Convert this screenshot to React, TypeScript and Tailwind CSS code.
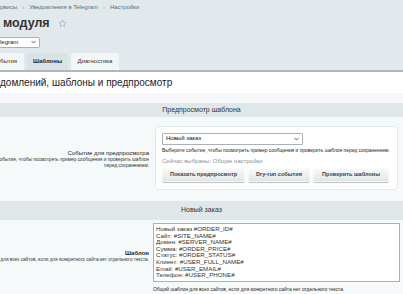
import React from "react";

const F = { fontFamily: '"Liberation Sans", Arial, sans-serif' };

function Star() {
  return (
    <svg width="9" height="9" viewBox="0 0 24 24" fill="none" stroke="#a3b1b8" strokeWidth="2" strokeLinejoin="round">
      <path d="M12 2.5l2.9 6.1 6.6.8-4.9 4.6 1.3 6.6L12 17.3l-5.9 3.3 1.3-6.6-4.9-4.6 6.6-.8z" />
    </svg>
  );
}

function Chevron() {
  return (
    <svg width="5" height="4" viewBox="0 0 10 6" fill="none" stroke="#555" strokeWidth="1.8">
      <path d="M1 1l4 4 4-4" />
    </svg>
  );
}

function Btn({ children, w }: { children: React.ReactNode; w: string }) {
  return (
    <div className={`${w} h-[14px] flex items-center justify-center rounded-[2px] bg-gradient-to-b from-[#f8fafa] to-[#dfe5e7] shadow-[0_1px_1px_rgba(0,0,0,0.25),inset_0_0_0_1px_rgba(255,255,255,0.6)] text-[5.6px] font-bold text-[#3b4448] whitespace-nowrap`}>
      {children}
    </div>
  );
}

const lines = [
  "Новый заказ #ORDER_ID#",
  "Сайт: #SITE_NAME#",
  "Домен: #SERVER_NAME#",
  "Сумма: #ORDER_PRICE#",
  "Статус: #ORDER_STATUS#",
  "Клиент: #USER_FULL_NAME#",
  "Email: #USER_EMAIL#",
  "Телефон: #USER_PHONE#",
];

export default function App() {
  return (
    <div style={F} className="w-[403px] h-[294px] overflow-hidden bg-[#e1e9ec] text-[#000]">
      {/* breadcrumbs */}
      <div className="h-[14px] flex items-center gap-[5px] text-[6px] text-[#5a6f7c] whitespace-nowrap pt-[1px]">
        <span>рвисы</span>
        <span className="text-[#8a9aa3]">›</span>
        <span>Уведомления в Telegram</span>
        <span className="text-[#8a9aa3]">›</span>
        <span>Настройки</span>
      </div>
      {/* title */}
      <div className="h-[17px] flex items-center gap-[8px] whitespace-nowrap pl-[3px] pt-[1px]">
        <span className="text-[12.5px] font-bold text-[#333]">модуля</span>
        <Star />
      </div>
      {/* select */}
      <div className="h-[22px] flex items-center">
        <div className="w-[40px] h-[11px] bg-white border border-[#a7b2b8] rounded-r-[2px] border-l-0 flex items-center overflow-hidden">
          <span className="text-[6px] text-[#222] whitespace-nowrap">legram</span>
          <span className="ml-auto mr-[3px]"><Chevron /></span>
        </div>
      </div>
      {/* tabs */}
      <div className="h-[17px] flex items-end gap-[3px] whitespace-nowrap">
        <div className="h-[17px] w-[24px] bg-[#f3f6f7] rounded-tr-[2px] flex items-center text-[6px] text-[#333]">бытия</div>
        <div className="h-[17px] w-[41px] bg-[#d9e2e5] rounded-t-[2px] flex items-center justify-center text-[6px] font-bold text-[#222]">Шаблоны</div>
        <div className="h-[17px] w-[48px] bg-[#f3f6f7] rounded-t-[2px] flex items-center justify-center text-[6px] text-[#333]">Диагностика</div>
      </div>
      <div className="h-[2px] bg-[#aeb7ba]" />
      {/* content */}
      <div className="bg-white">
        <div className="h-[21px] flex items-center whitespace-nowrap text-[10px] text-[#222]">
          домлений, шаблоны и предпросмотр
        </div>
        <div className="h-[10px] bg-[#f5f7f8]" />
        <div className="h-[14px] bg-[#dfe7ea] flex items-center justify-center text-[7px] text-[#333]">Предпросмотр шаблона</div>
        <div className="bg-[#f6f9f9] flex items-center h-[81px]">
          <div className="w-[150px] pr-[1px] text-right flex flex-col items-end whitespace-nowrap pt-[2px]">
            <div className="text-[6px] text-[#222] leading-[8px]">Событие для предпросмотра</div>
            <div className="text-[4.75px] text-[#333] leading-[6px]">обытие, чтобы посмотреть пример сообщения и проверить шаблон</div>
            <div className="text-[4.75px] text-[#333] leading-[6px]">перед сохранением.</div>
          </div>
          <div className="ml-[5px] w-[243px] h-[64px] bg-white border border-[#e3e9eb] rounded-[4px] px-[6px] pt-[6px]">
            <div className="w-[141px] h-[12px] bg-white border border-[#a7b2b8] rounded-[1px] flex items-center px-[3px]">
              <span className="text-[6px] text-[#111]">Новый заказ</span>
              <span className="ml-auto"><Chevron /></span>
            </div>
            <div className="mt-[3px] text-[4.9px] leading-[6px] text-[#222] whitespace-nowrap">Выберите событие, чтобы посмотреть пример сообщения и проверить шаблон перед сохранением.</div>
            <div className="mt-[3px] text-[6px] leading-[8px] text-[#8a9499] whitespace-nowrap">Сейчас выбраны: Общие настройки</div>
            <div className="mt-[3px] flex gap-[3px]">
              <Btn w="w-[83px]">Показать предпросмотр</Btn>
              <Btn w="w-[62px]">Dry-run события</Btn>
              <Btn w="w-[76px]">Проверить шаблоны</Btn>
            </div>
          </div>
        </div>
        <div className="h-[3px] bg-[#f6f9f9]" />
        <div className="h-[19px] bg-[#dfe7ea] flex items-center justify-center text-[7px] text-[#333]">Новый заказ</div>
        <div className="bg-[#f6f9f9] flex h-[100px]">
          <div className="w-[150px] text-right flex flex-col items-end pt-[30px] whitespace-nowrap">
            <div className="text-[6px] font-bold text-[#222] leading-[7px] pr-[1px]">Шаблон</div>
            <div className="text-[4.7px] text-[#333] leading-[6px] pr-[1px]">для всех сайтов, если для конкретного сайта нет отдельного текста.</div>
          </div>
          <div className="ml-[3px] pt-[3px] flex-1 min-w-0">
            <div className="w-[247px] h-[59px] bg-white border border-[#a7b2b8] overflow-hidden px-[2px] pt-[2px]">
              {lines.map((l) => (
                <div key={l} className="text-[6.2px] leading-[6.6px] text-[#333] whitespace-nowrap">{l}</div>
              ))}
            </div>
            <div className="mt-[4px] text-[4.9px] text-[#222] whitespace-nowrap">Общий шаблон для всех сайтов, если для конкретного сайта нет отдельного текста.</div>
          </div>
        </div>
      </div>
    </div>
  );
}
